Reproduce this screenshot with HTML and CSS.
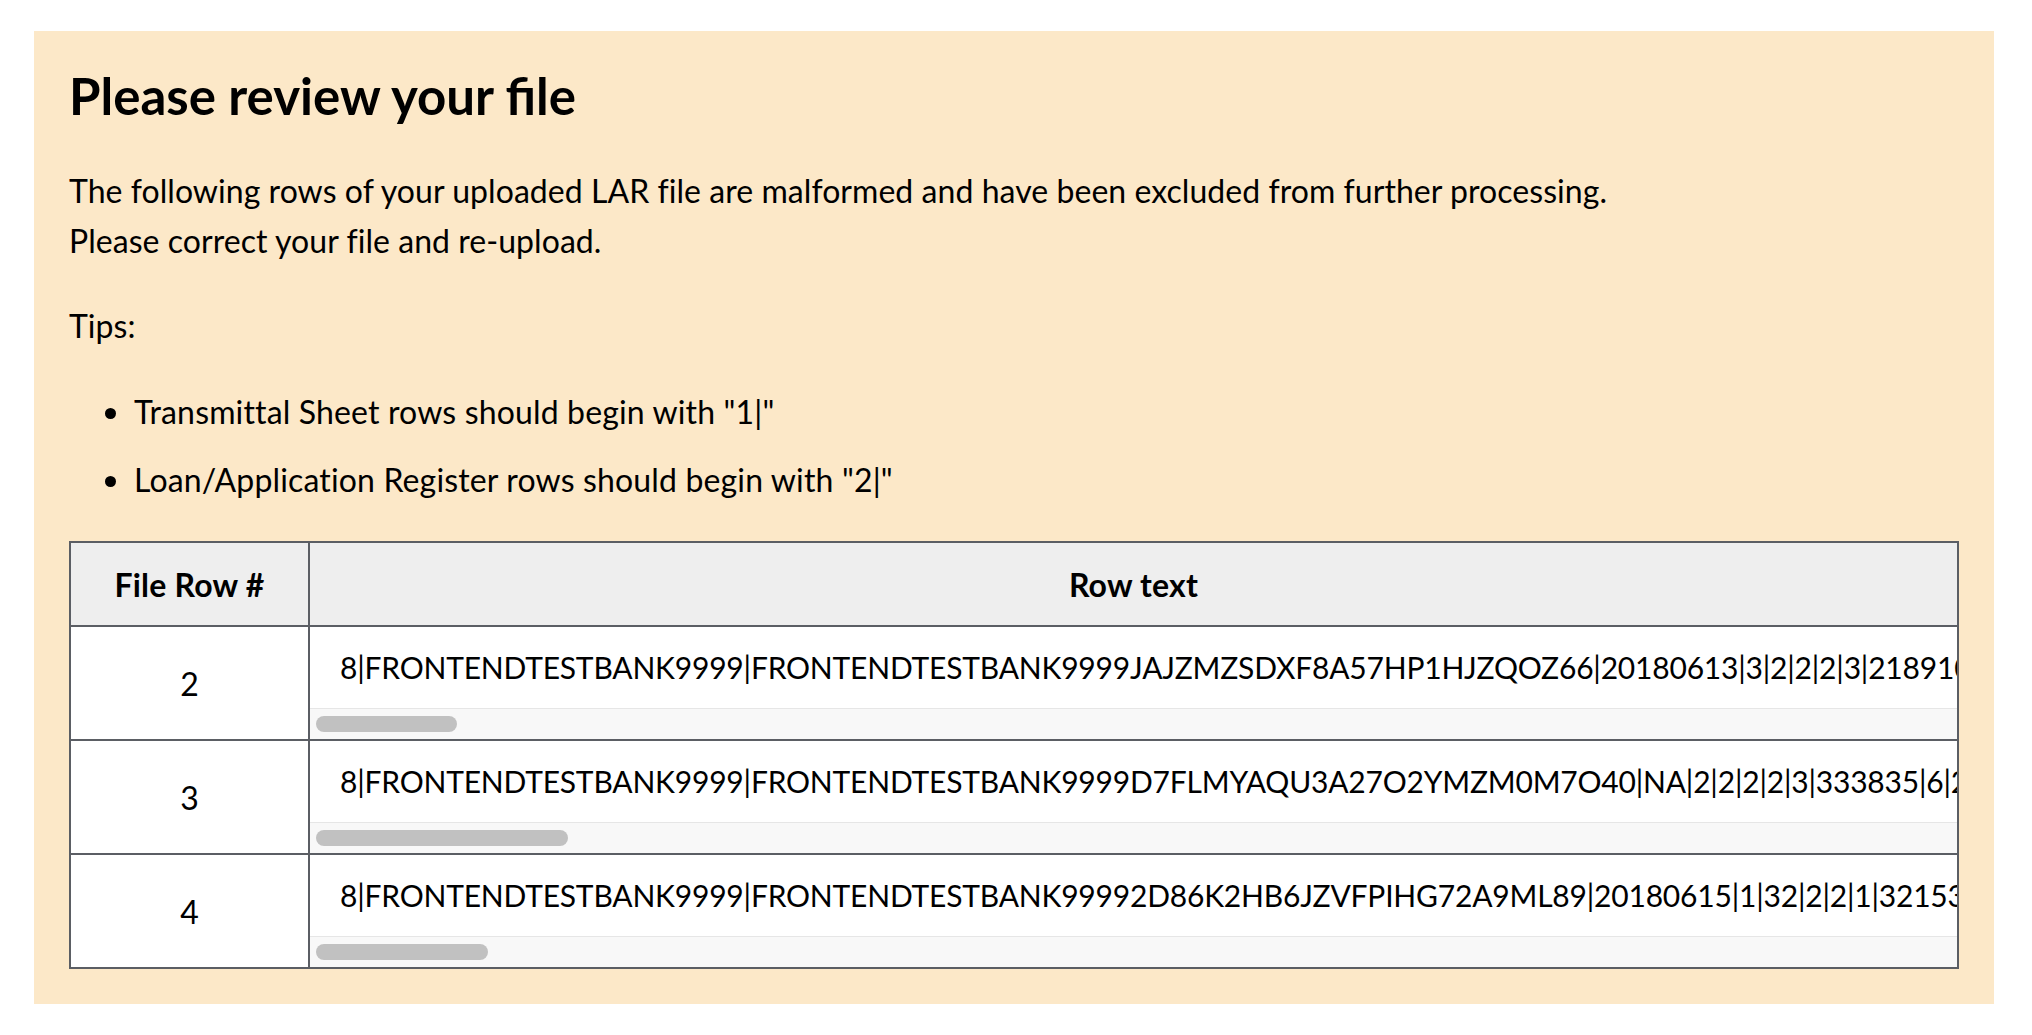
FILE: index.html
```html
<!DOCTYPE html>
<html lang="en">
<head>
<meta charset="utf-8">
<title>Please review your file</title>
<link rel="stylesheet" href="styles.css">
</head>
<body>
<section class="alert">
  <h2 class="alert-title">Please review your file</h2>
  <p class="alert-text">The following rows of your uploaded LAR file are malformed and have been excluded from further processing.<br>Please correct your file and re-upload.</p>
  <p class="tips-label">Tips:</p>
  <ul class="tips">
    <li>Transmittal Sheet rows should begin with "1|"</li>
    <li>Loan/Application Register rows should begin with "2|"</li>
  </ul>
  <table class="rows-table">
    <thead>
      <tr>
        <th class="col-num"><div class="head-cell">File Row #</div></th>
        <th class="col-text"><div class="head-cell">Row text</div></th>
      </tr>
    </thead>
    <tbody>
      <tr>
        <td class="col-num"><div class="num-cell">2</div></td>
        <td class="col-text">
          <div class="text-scroll"><div class="text-line">8|FRONTENDTESTBANK9999|FRONTENDTESTBANK9999JAJZMZSDXF8A57HP1HJZQOZ66|20180613|3|2|2|2|3|218910|6|2</div></div>
          <div class="track"><div class="thumb" style="width:141px"></div></div>
        </td>
      </tr>
      <tr>
        <td class="col-num"><div class="num-cell">3</div></td>
        <td class="col-text">
          <div class="text-scroll"><div class="text-line">8|FRONTENDTESTBANK9999|FRONTENDTESTBANK9999D7FLMYAQU3A27O2YMZM0M7O40|NA|2|2|2|2|3|333835|6|2018</div></div>
          <div class="track"><div class="thumb" style="width:252px"></div></div>
        </td>
      </tr>
      <tr>
        <td class="col-num"><div class="num-cell">4</div></td>
        <td class="col-text">
          <div class="text-scroll"><div class="text-line">8|FRONTENDTESTBANK9999|FRONTENDTESTBANK99992D86K2HB6JZVFPIHG72A9ML89|20180615|1|32|2|2|1|32153|1</div></div>
          <div class="track"><div class="thumb" style="width:172px"></div></div>
        </td>
      </tr>
    </tbody>
  </table>
</section>
</body>
</html>
```
FILE: styles.css
```css
html, body {
  margin: 0;
  padding: 0;
  background: #ffffff;
}

body {
  padding: 31px 38px 33px 34px;
  font-family: "Lato", "Liberation Sans", sans-serif;
  color: #000000;
}

.alert {
  background: #fce8c8;
  padding: 35px 35px 35px 35px;
}

.alert-title {
  margin: 0 0 40px 0;
  font-size: 51px;
  line-height: 60px;
  font-weight: 700;
}

.alert-text,
.tips-label {
  margin: 0 0 35px 0;
  font-size: 32px;
  line-height: 50px;
  letter-spacing: 0.05px;
}

.tips-label {
  margin-bottom: 36px;
}

.tips {
  list-style: none;
  margin: 0 0 36px 0;
  padding: 0 0 0 36px;
  display: flex;
  flex-direction: column;
  gap: 18px;
}

.tips li {
  display: flex;
  align-items: center;
  font-size: 32px;
  line-height: 50px;
  letter-spacing: 0.15px;
}

.tips li::before {
  content: "";
  width: 11px;
  height: 11px;
  border-radius: 50%;
  background: #000000;
  margin: 2px 18px 0 0;
  flex: none;
}

.rows-table {
  width: 100%;
  border-collapse: separate;
  border-spacing: 0;
  border-top: 2px solid #5b5e64;
  border-left: 2px solid #5b5e64;
  table-layout: fixed;
}

.rows-table th,
.rows-table td {
  padding: 0;
  border-right: 2px solid #5b5e64;
  border-bottom: 2px solid #5b5e64;
  vertical-align: middle;
  background: #ffffff;
}

.rows-table .col-num {
  width: 237px;
}

.rows-table th {
  background: #eeeeee;
}

.head-cell {
  height: 82px;
  display: flex;
  align-items: center;
  justify-content: center;
  font-size: 32px;
  font-weight: 700;
  letter-spacing: 0.2px;
}

.num-cell {
  display: flex;
  align-items: center;
  justify-content: center;
  font-size: 32px;
}

.text-scroll {
  height: 81px;
  overflow: hidden;
  padding-left: 30px;
}

.text-line {
  white-space: nowrap;
  font-size: 30px;
  line-height: 81px;
  letter-spacing: -0.2px;
}

.track {
  height: 30px;
  border-top: 1px solid #e6e6e6;
  background: #f8f8f8;
  display: flex;
  align-items: center;
  padding-left: 6px;
}

.thumb {
  height: 16px;
  border-radius: 8px;
  background: #c1c1c1;
}
```
